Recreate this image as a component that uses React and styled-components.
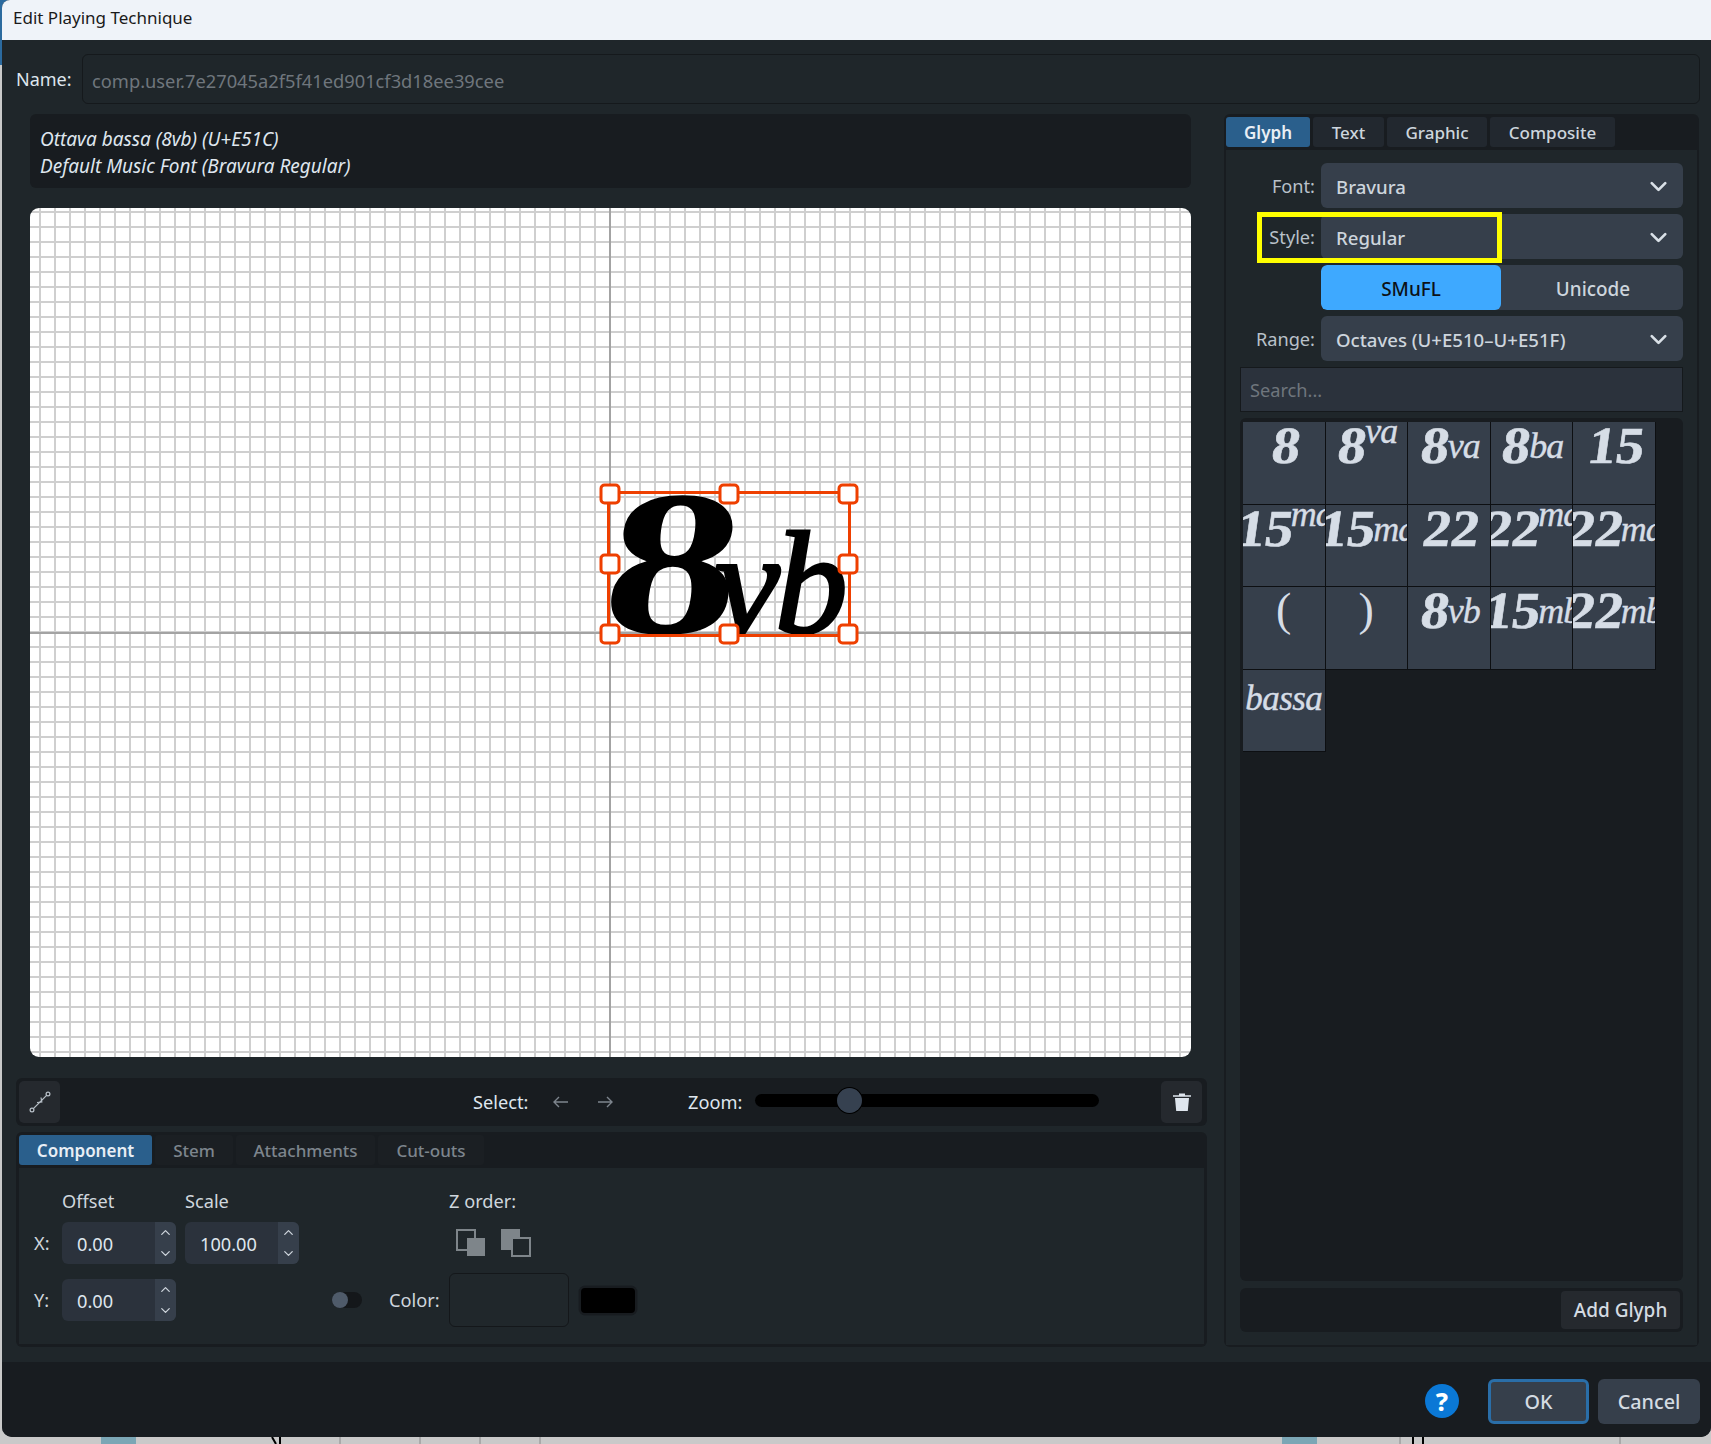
import React from 'react';
import styled, { createGlobalStyle } from 'styled-components';
import { ChevronDown, ChevronUp } from 'lucide-react';

const Global = createGlobalStyle`
  html, body { margin: 0; padding: 0; background: #c9c9c9; }
  * { box-sizing: border-box; }
  body { font-family: "Noto Sans", "Open Sans", sans-serif; }
`;

const Page = styled.div`
  width: 1711px; height: 1444px; overflow: hidden;
  display: flex; flex-direction: column;
  background: linear-gradient(to bottom, #2b6a9f 0, #2b6a9f 65px, #c9c9c9 65px);
`;
const Win = styled.div`
  margin-left: 2px; width: 1709px; height: 1437px; flex: none;
  display: flex; flex-direction: column;
  background: #1f262a; border-radius: 8px 0 10px 10px; overflow: hidden;
`;
const TitleBar = styled.div`
  height: 40px; flex: none; background: #eff3f9; color: #1a1a1a;
  display: flex; align-items: center; padding: 0 0 6px 11px;
  font-size: 17px; font-family: "Noto Sans", sans-serif;
`;
const NameRow = styled.div`
  display: flex; align-items: center; height: 50px; margin: 14px 11px 0 14px; flex: none;
`;
const NameLabel = styled.span`
  width: 66px; color: #dfe6ee; font-size: 18px; padding-bottom: 1px;
`;
const NameInput = styled.div`
  flex: 1; height: 50px; background: #1f262a; border: 1px solid #15191c; border-radius: 6px;
  color: #6f767d; font-size: 18.3px; display: flex; align-items: center; padding: 2px 0 0 9px;
`;
const Columns = styled.div`
  display: flex; margin: 10px 10px 0 14px; height: 1233px; flex: none;
`;
const LeftCol = styled.div`
  width: 1189px; flex: none; display: flex; flex-direction: column;
`;
const Description = styled.div`
  margin: 0 14px 0 14px; height: 74px; background: #181c20; border-radius: 6px;
  padding: 12px 10px; color: #dfe6ee; font-style: italic; font-size: 19px; line-height: 27px;
`;
const Canvas = styled.div`
  position: relative; margin: 20px 14px 0 14px; height: 849px; border-radius: 9px; overflow: hidden;
  background-color: #fff;
  background-image:
    linear-gradient(to right, #cfcfcf 2px, transparent 2px),
    linear-gradient(to bottom, #cfcfcf 2px, transparent 2px);
  background-size: 15px 15px;
  background-position: 9px 3px;
`;
const AxisV = styled.div`
  position: absolute; top: 0; bottom: 0; left: 579px; width: 2px; background: #a3a3a3;
`;
const AxisH = styled.div`
  position: absolute; left: 0; right: 0; top: 424px; height: 2px; background: #a3a3a3;
`;
const BigGlyph = styled.div`
  position: absolute; left: 580px; top: 286px; height: 140px; width: 240px; color: #000;
  display: flex; align-items: baseline; font-family: "Liberation Serif", serif; white-space: nowrap;
  line-height: 140px;
`;
const BigEight = styled.span`
  font-size: 207px; font-weight: 700; transform: skewX(-7deg) scaleX(1.3); transform-origin: left bottom;
  display: inline-block; width: 116px; line-height: 140px; margin-left: -12px;
`;
const BigSuffix = styled.span`
  font-size: 146px; font-style: italic; letter-spacing: -5px; line-height: 140px; -webkit-text-stroke: 3px #000;
  margin-left: 1px;
`;
const SelBox = styled.div`
  position: absolute; left: 576.5px; top: 283px; width: 244.5px; height: 146px; border: 3px solid #ee3f00;
`;
const Handle = styled.div`
  position: absolute; width: 21px; height: 21px; background: #fff; border: 3.5px solid #ee3f00; border-radius: 5px;
  left: ${p => p.$x}%; top: ${p => p.$y}%; transform: translate(-50%, -50%);
`;
const Toolbar = styled.div`
  margin-top: 21px; height: 48px; margin-right: -2px; flex: none; background: #181c20; border-radius: 6px;
  padding: 3px; display: flex; align-items: center; position: relative;
`;
const ToolBtn = styled.div`
  width: 41px; height: 42px; background: #25292e; border-radius: 5px; display: flex; align-items: center; justify-content: center; flex: none;
  margin-left: ${p => p.$ml || 0}px;
`;
const SelectGroup = styled.div`
  margin-left: 413px; display: flex; align-items: center; width: 215px; flex: none;
`;
const ToolLabel = styled.span`
  color: #dfe6ee; font-size: 18.2px;
`;
const ZoomTrack = styled.div`
  position: relative; width: 344px; height: 13px; background: #000; border-radius: 7px; margin: 0 0 4px 13px; flex: none;
`;
const ZoomThumb = styled.div`
  position: absolute; left: 82px; top: -6px; width: 25px; height: 25px; border-radius: 50%; background: #364150; box-shadow: 0 0 0 1px #000;
`;
const Arrow = styled.svg`
  margin-left: ${p => p.$ml || 0}px; flex: none;
`;
const PanelWrap = styled.div`
  margin-top: 6px; height: 215px; margin-right: -2px; flex: none; background: #181c20; border-radius: 6px;
  padding: 3px; display: flex; flex-direction: column;
`;
const TabBar = styled.div`
  display: flex; height: 30px; flex: none; gap: 3px;
`;
const Tab = styled.div`
  width: ${p => p.$w}px; height: 30px; flex: none; border-radius: 3px;
  display: flex; align-items: center; justify-content: center;
  font-size: 17px; font-weight: ${p => p.$active ? 600 : 500};
  background: ${p => p.$active ? '#2a5f8c' : p.$dim ? '#1b1f23' : '#22282f'};
  color: ${p => p.$active ? '#e8eef5' : p.$dim ? '#7d858d' : '#cdd5dd'};
`;
const PanelBody = styled.div`
  flex: 1; margin-top: 3px; background: #1f262a; display: grid;
  grid-template-columns: 43px 123px 114px 90px 60px 129px 69px;
  grid-template-rows: 54px 57px 42px; position: relative;
`;
const FieldHead = styled.div`
  color: #cfd6dd; font-size: 18.2px; display: flex; align-items: flex-end; padding-bottom: 9px;
  grid-column: ${p => p.$col}; grid-row: 1;
`;
const AxisLabel = styled.div`
  color: #cfd6dd; font-size: 18.2px; display: flex; align-items: center; padding-left: 15px; height: 42px;
  grid-column: 1; grid-row: ${p => p.$row};
`;
const SpinWrap = styled.div`
  grid-column: ${p => p.$col}; grid-row: ${p => p.$row};
  width: 114px; height: 42px; background: #2b323c; border-radius: 6px; display: flex; overflow: hidden;
`;
const SpinValue = styled.div`
  flex: 1; color: #dfe6ee; font-size: 18.2px; display: flex; align-items: center; padding: 2px 0 0 15px;
`;
const SpinBtns = styled.div`
  width: 21px; background: #363f4b; display: flex; flex-direction: column; align-items: center; justify-content: space-between; padding: 3px 0;
  color: #cfd6dd;
`;
const ZIcons = styled.div`
  grid-column: 6 / span 2; grid-row: 2; display: flex; gap: 15px; padding: 7px 0 0 7px; align-self: start;
`;
const SwitchCell = styled.div`
  grid-column: 4; grid-row: 3; display: flex; align-items: center; padding-left: 33px;
`;
const SwitchTrack = styled.div`
  width: 30px; height: 16px; border-radius: 8px; background: #14171a; position: relative; flex: none;
`;
const SwitchKnob = styled.div`
  position: absolute; left: 0; top: 0; width: 16px; height: 16px; border-radius: 50%; background: #4f5b6a;
`;
const ColorLabel = styled.div`
  grid-column: 5; grid-row: 3; color: #cfd6dd; font-size: 18.2px; display: flex; align-items: center;
`;
const ColorField = styled.div`
  grid-column: 6; grid-row: 3; width: 120px; height: 54px; border: 1px solid #14171a; border-radius: 6px; align-self: center; background: #20272b;
`;
const Swatch = styled.div`
  grid-column: 7; grid-row: 3; width: 54px; height: 25px; margin-left: 3px; background: #000; border-radius: 4px; box-shadow: 0 0 0 2.5px #181c20; align-self: center;
`;
const RightCol = styled.div`
  margin-left: 19px; width: 475px; flex: none; height: 1233px; background: #181c20; border-radius: 6px; padding: 3px 2px 2px 2px; display: flex; flex-direction: column;
`;
const RightBody = styled.div`
  flex: 1; margin-top: 3px; background: #1f262a; padding: 13px 14px 13px 14px; display: flex; flex-direction: column; min-height: 0;
`;
const FormRow = styled.div`
  position: relative; display: flex; align-items: center; height: 45px; margin-bottom: 6px; flex: none;
`;
const FormLabel = styled.span`
  width: 81px; flex: none; text-align: right; padding: 1px 6px 0 0; color: #b9c1c9; font-size: 18.2px;
`;
const Select = styled.div`
  flex: 1; height: 45px; background: #363f4b; border-radius: 6px; display: flex; align-items: center; justify-content: space-between;
  padding: 1px 11px 0 15px; color: #cdd5dd; font-size: 18.6px; font-weight: 500;
`;
const Highlight = styled.div`
  position: absolute; left: 17px; top: -2px; width: 245px; height: 51px; border: 5px solid #ffff00;
`;
const Seg = styled.div`
  flex: 1; display: flex; height: 45px; background: #363f4b; border-radius: 6px; overflow: hidden;
`;
const SegBtn = styled.div`
  flex: ${p => p.$on ? '0 0 180px' : 1}; display: flex; align-items: center; justify-content: center; font-size: 18.9px; font-weight: 500;
  padding: 2px 0 0 ${p => p.$on ? 0 : 2}px;
  background: ${p => p.$on ? '#3ea9ff' : 'transparent'}; color: ${p => p.$on ? '#0c1116' : '#cdd5dd'}; border-radius: 6px;
`;
const Search = styled.div`
  height: 45px; flex: none; background: #2b323c; border: 1px solid #15191c; color: #6f767d; font-size: 18.2px;
  display: flex; align-items: center; padding: 1px 0 0 9px;
`;
const GlyphList = styled.div`
  margin-top: 6px; flex: 1; min-height: 0; background: #181c20; border-radius: 6px; padding: 4px 0 0 3px;
`;
const GlyphGrid = styled.div`
  display: grid; grid-template-columns: repeat(5, 82.5px); grid-auto-rows: 82.5px; width: 413px;
`;
const Tile = styled.div`
  background: #363f4b; border-right: 1.5px solid #0d0f12; border-bottom: 1.5px solid #0d0f12; overflow: hidden;
  display: flex; justify-content: center; color: #d6dde6; font-family: "Liberation Serif", serif; white-space: nowrap;
  line-height: 48px; height: 100%;
`;
const Num = styled.span`
  font-size: 52px; font-weight: 700; flex: none; display: inline-block; margin: 0 2px; transform: skewX(-8deg) scaleX(1.08); -webkit-text-stroke: .6px #d6dde6;
`;
const Sup = styled.span`
  font-size: 36px; font-style: italic; flex: none; letter-spacing: -1px; position: relative; top: ${p => p.$up ? '-15px' : '0'};
  -webkit-text-stroke: .4px #d6dde6;
`;
const Paren = styled.span`
  font-size: 46px; flex: none; line-height: 46px;
`;
const Word = styled.span`
  font-size: 35px; font-style: italic; flex: none; line-height: 58px; letter-spacing: -.5px; -webkit-text-stroke: .4px #d6dde6;
`;
const AddBar = styled.div`
  margin-top: 7px; height: 44px; flex: none; background: #181c20; border-radius: 6px; display: flex; justify-content: flex-end; align-items: center; padding-right: 3px;
`;
const AddBtn = styled.div`
  width: 119px; height: 38px; background: #25292e; border-radius: 4px; color: #d4dbe2; font-size: 19px; font-weight: 500; display: flex; align-items: center; justify-content: center;
`;
const Footer = styled.div`
  margin-top: 15px; flex: 1; background: #181c20; display: flex; align-items: center; justify-content: flex-end; padding: 3px 11px 0 0; gap: 9px;
`;
const Help = styled.div`
  width: 34px; height: 34px; border-radius: 50%; background: #0a78d6; color: #fff; font-weight: 800; font-size: 25px;
  display: flex; align-items: center; justify-content: center; margin-right: 20px; font-family: "Noto Sans", sans-serif;
`;
const FootBtn = styled.div`
  width: ${p => p.$w}px; height: 45px; background: #363f4b; border-radius: 6px; color: #d4dbe2; font-size: 19.8px; font-weight: 500;
  display: flex; align-items: center; justify-content: center;
  border: ${p => p.$primary ? '3px solid #2a6ea8' : 'none'};
`;
const Backdrop = styled.svg`
  display: block; flex: none;
`;

const tiles = [
  [['n', '8']], [['n', '8'], ['u', 'va']], [['n', '8'], ['s', 'va']], [['n', '8'], ['s', 'ba']], [['n', '15']],
  [['n', '15'], ['u', 'ma']], [['n', '15'], ['s', 'ma']], [['n', '22']], [['n', '22'], ['u', 'ma']], [['n', '22'], ['s', 'ma']],
  [['p', '(']], [['p', ')']], [['n', '8'], ['s', 'vb']], [['n', '15'], ['s', 'mb']], [['n', '22'], ['s', 'mb']],
  [['w', 'bassa']],
];

function Part({ k, t }) {
  if (k === 'n') return <Num>{t}</Num>;
  if (k === 'u') return <Sup $up>{t}</Sup>;
  if (k === 's') return <Sup>{t}</Sup>;
  if (k === 'p') return <Paren>{t}</Paren>;
  return <Word>{t}</Word>;
}

const Spin = ({ col, row, value }) => (
  <SpinWrap $col={col} $row={row}>
    <SpinValue>{value}</SpinValue>
    <SpinBtns>
      <ChevronUp size={15} strokeWidth={2} />
      <ChevronDown size={15} strokeWidth={2} />
    </SpinBtns>
  </SpinWrap>
);

const Chev = () => <ChevronDown size={27} strokeWidth={2.4} color="#d9e0e7" />;

export default function App() {
  return (
    <Page>
      <Global />
      <Win>
        <TitleBar>Edit Playing Technique</TitleBar>
        <NameRow>
          <NameLabel>Name:</NameLabel>
          <NameInput>comp.user.7e27045a2f5f41ed901cf3d18ee39cee</NameInput>
        </NameRow>
        <Columns>
          <LeftCol>
            <Description>
              <div>Ottava bassa (8vb) (U+E51C)</div>
              <div>Default Music Font (Bravura Regular)</div>
            </Description>
            <Canvas>
              <AxisV />
              <AxisH />
              <BigGlyph>
                <BigEight>8</BigEight>
                <BigSuffix>vb</BigSuffix>
              </BigGlyph>
              <SelBox>
                {[[0, 0], [50, 0], [100, 0], [0, 50], [100, 50], [0, 100], [50, 100], [100, 100]].map(([x, y]) => (
                  <Handle key={x + '-' + y} $x={x} $y={y} />
                ))}
              </SelBox>
            </Canvas>
            <Toolbar>
              <ToolBtn>
                <svg width="24" height="24" viewBox="0 0 24 24" fill="none" stroke="#b9c1c9" strokeWidth="1.2">
                  <circle cx="4" cy="20" r="1.9" />
                  <circle cx="20" cy="4" r="1.9" />
                  <path d="M5.4 18.6 L18.6 5.4" />
                  <path d="M9 12.5 L13.8 12 L13 7.5" />
                </svg>
              </ToolBtn>
              <SelectGroup>
                <ToolLabel>Select:</ToolLabel>
                <Arrow $ml={25} width="16" height="12" viewBox="0 0 16 12" fill="none" stroke="#7d858d" strokeWidth="1.4"><path d="M15 6H1M6 1L1 6l5 5" /></Arrow>
                <Arrow $ml={28} width="16" height="12" viewBox="0 0 16 12" fill="none" stroke="#7d858d" strokeWidth="1.4"><path d="M1 6h14M10 1l5 5-5 5" /></Arrow>
              </SelectGroup>
              <ToolLabel>Zoom:</ToolLabel>
              <ZoomTrack><ZoomThumb /></ZoomTrack>
              <ToolBtn $ml={62}>
                <svg width="18" height="20" viewBox="0 0 18 20" fill="#dfe6ee">
                  <path d="M0 3.2h6V1.4h6v1.8h6v1.6H0z" />
                  <path d="M2 6h14l-1.2 13H3.2z" />
                </svg>
              </ToolBtn>
            </Toolbar>
            <PanelWrap>
              <TabBar>
                <Tab $w={133} $active>Component</Tab>
                <Tab $w={78} $dim>Stem</Tab>
                <Tab $w={139} $dim>Attachments</Tab>
                <Tab $w={106} $dim>Cut-outs</Tab>
              </TabBar>
              <PanelBody>
                <FieldHead $col={2}>Offset</FieldHead>
                <FieldHead $col={3}>Scale</FieldHead>
                <FieldHead $col="6 / span 2">Z order:</FieldHead>
                <AxisLabel $row={2}>X:</AxisLabel>
                <AxisLabel $row={3}>Y:</AxisLabel>
                <Spin col={2} row={2} value="0.00" />
                <Spin col={3} row={2} value="100.00" />
                <Spin col={2} row={3} value="0.00" />
                <ZIcons>
                  <svg width="30" height="28" viewBox="0 0 30 28" fill="none">
                    <rect x="1" y="1" width="18" height="20" stroke="#7e858a" strokeWidth="2" />
                    <rect x="11" y="9" width="18" height="18" fill="#7e858a" />
                  </svg>
                  <svg width="30" height="28" viewBox="0 0 30 28" fill="none">
                    <rect x="0" y="0" width="19" height="21" fill="#7e858a" />
                    <rect x="11" y="9" width="18" height="18" fill="#1f262a" stroke="#7e858a" strokeWidth="2" />
                  </svg>
                </ZIcons>
                <SwitchCell><SwitchTrack><SwitchKnob /></SwitchTrack></SwitchCell>
                <ColorLabel>Color:</ColorLabel>
                <ColorField />
                <Swatch />
              </PanelBody>
            </PanelWrap>
          </LeftCol>
          <RightCol>
            <TabBar>
              <Tab $w={84} $active>Glyph</Tab>
              <Tab $w={71}>Text</Tab>
              <Tab $w={100}>Graphic</Tab>
              <Tab $w={125}>Composite</Tab>
            </TabBar>
            <RightBody>
              <FormRow><FormLabel>Font:</FormLabel><Select>Bravura<Chev /></Select></FormRow>
              <FormRow>
                <FormLabel>Style:</FormLabel><Select>Regular<Chev /></Select>
                <Highlight />
              </FormRow>
              <FormRow>
                <FormLabel />
                <Seg><SegBtn $on>SMuFL</SegBtn><SegBtn>Unicode</SegBtn></Seg>
              </FormRow>
              <FormRow><FormLabel>Range:</FormLabel><Select>Octaves (U+E510–U+E51F)<Chev /></Select></FormRow>
              <Search>Search...</Search>
              <GlyphList>
                <GlyphGrid>
                  {tiles.map((parts, i) => (
                    <Tile key={i}>
                      {parts.map(([k, t], j) => <Part key={j} k={k} t={t} />)}
                    </Tile>
                  ))}
                </GlyphGrid>
              </GlyphList>
              <AddBar><AddBtn>Add Glyph</AddBtn></AddBar>
            </RightBody>
          </RightCol>
        </Columns>
        <Footer>
          <Help>?</Help>
          <FootBtn $w={101} $primary>OK</FootBtn>
          <FootBtn $w={102}>Cancel</FootBtn>
        </Footer>
      </Win>
      <Backdrop width="1711" height="7" viewBox="0 0 1711 7">
        <rect x="0" y="0" width="1711" height="7" fill="#c9c9c9" />
        <rect x="101" y="0" width="35" height="7" fill="#7ba6b5" />
        <rect x="1282" y="0" width="35" height="7" fill="#7ba6b5" />
        <path d="M272 0l4 7M280 0v7M1413 0v7M1423 0v7" stroke="#000" strokeWidth="2" />
        <path d="M340 0v7M420 0v7M480 0v7M540 0v7M1400 0v7M1620 0v7" stroke="#8a8a8a" strokeWidth="1" />
      </Backdrop>
    </Page>
  );
}
